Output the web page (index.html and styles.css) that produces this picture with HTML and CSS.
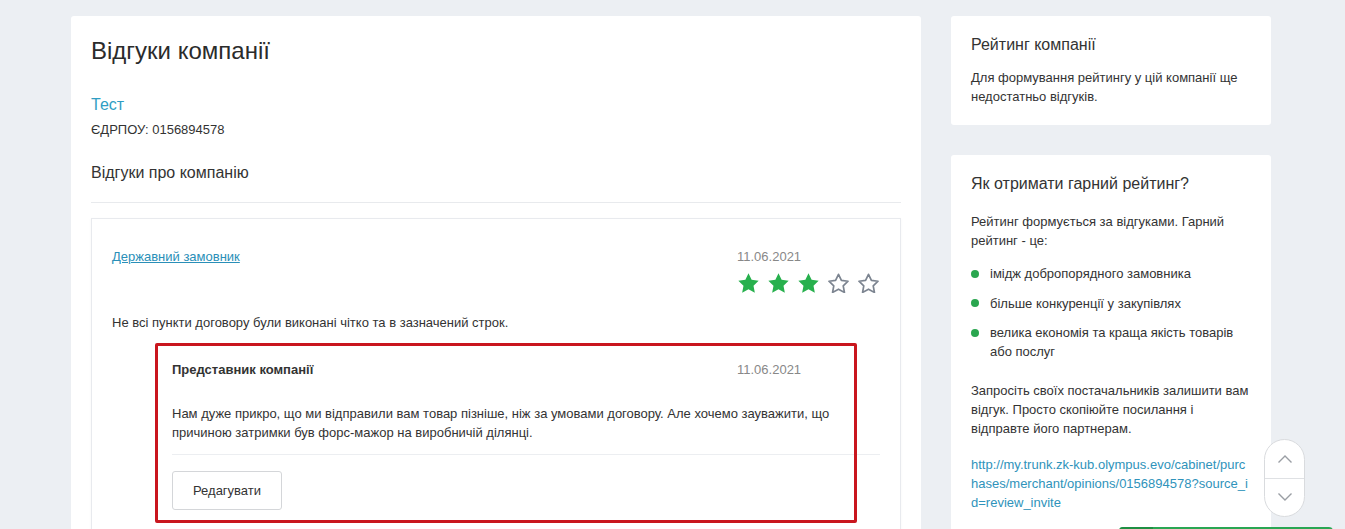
FILE: index.html
```html
<!DOCTYPE html>
<html lang="uk">
<head>
<meta charset="utf-8">
<title>Відгуки компанії</title>
<link rel="stylesheet" href="styles.css">
</head>
<body>
<div class="page">
  <main class="main-card">
    <h1 class="page-title">Відгуки компанії</h1>
    <a class="company-name" href="#">Тест</a>
    <div class="edrpou">ЄДРПОУ: 0156894578</div>
    <h2 class="section-title">Відгуки про компанію</h2>

    <div class="review">
      <div class="review-head">
        <a class="review-author" href="#">Державний замовник</a>
        <div class="review-meta">
          <div class="date">11.06.2021</div>
          <div class="stars">
            <svg class="star star-on" viewBox="1.6 1.5 20.8 19.9"><path d="M12 1.8l3.1 6.5 7 .9-5.1 4.9 1.3 7L12 17.7l-6.3 3.4 1.3-7L1.9 9.2l7-.9z"/></svg>
            <svg class="star star-on" viewBox="1.6 1.5 20.8 19.9"><path d="M12 1.8l3.1 6.5 7 .9-5.1 4.9 1.3 7L12 17.7l-6.3 3.4 1.3-7L1.9 9.2l7-.9z"/></svg>
            <svg class="star star-on" viewBox="1.6 1.5 20.8 19.9"><path d="M12 1.8l3.1 6.5 7 .9-5.1 4.9 1.3 7L12 17.7l-6.3 3.4 1.3-7L1.9 9.2l7-.9z"/></svg>
            <svg class="star star-off" viewBox="1.6 1.5 20.8 19.9"><path d="M12 2.8l2.9 6.1 6.6.8-4.8 4.6 1.2 6.5L12 17.6l-5.9 3.2 1.2-6.5-4.8-4.6 6.6-.8z"/></svg>
            <svg class="star star-off" viewBox="1.6 1.5 20.8 19.9"><path d="M12 2.8l2.9 6.1 6.6.8-4.8 4.6 1.2 6.5L12 17.6l-5.9 3.2 1.2-6.5-4.8-4.6 6.6-.8z"/></svg>
          </div>
        </div>
      </div>
      <p class="review-text">Не всі пункти договору були виконані чітко та в зазначений строк.</p>

      <div class="reply">
        <div class="reply-head">
          <div class="reply-author">Представник компанії</div>
          <div class="reply-meta"><div class="date">11.06.2021</div></div>
        </div>
        <p class="reply-text">Нам дуже прикро, що ми відправили вам товар пізніше, ніж за умовами договору. Але хочемо зауважити, що причиною затримки був форс-мажор на виробничій ділянці.</p>
        <div class="reply-actions">
          <button class="btn" type="button">Редагувати</button>
        </div>
      </div>
    </div>
  </main>

  <aside class="sidebar">
    <section class="side-card">
      <h3 class="side-title">Рейтинг компанії</h3>
      <p class="side-text side-text-first">Для формування рейтингу у цій компанії ще недостатньо відгуків.</p>
    </section>
    <section class="side-card side-card-tall">
      <h3 class="side-title">Як отримати гарний рейтинг?</h3>
      <p class="side-text side-text-lead">Рейтинг формується за відгуками. Гарний рейтинг - це:</p>
      <ul class="benefits">
        <li>імідж добропорядного замовника</li>
        <li>більше конкуренції у закупівлях</li>
        <li>велика економія та краща якість товарів або послуг</li>
      </ul>
      <p class="side-text side-text-invite">Запросіть своїх постачальників залишити вам відгук. Просто скопіюйте посилання і відправте його партнерам.</p>
      <a class="invite-link" href="#">http://my.trunk.zk-kub.olympus.evo/cabinet/purchases/merchant/opinions/0156894578?source_id=review_invite</a>
    </section>
  </aside>
</div>

<div class="highlight"></div>

<div class="scroll-nav">
  <button class="scroll-btn" type="button" aria-label="Вгору">
    <svg viewBox="0 0 16 10" class="chev"><polyline points="1.5,8.5 8,2 14.5,8.5"/></svg>
  </button>
  <button class="scroll-btn scroll-btn-down" type="button" aria-label="Вниз">
    <svg viewBox="0 0 16 10" class="chev"><polyline points="1.5,1.5 8,8 14.5,1.5"/></svg>
  </button>
</div>

<div class="green-widget"><span class="green-widget-icon"></span></div>
</body>
</html>
```

FILE: styles.css
```css
html, body {
  margin: 0;
  padding: 0;
}

body {
  background: #eceff3;
  font-family: "Liberation Sans", Arial, sans-serif;
  font-size: 13px;
  line-height: 1.42857;
  color: #333;
  height: 529px;
  overflow: hidden;
  position: relative;
}

.page {
  display: flex;
  align-items: flex-start;
  padding: 16px 0 0 71px;
  gap: 30px;
}

/* ---------- main card ---------- */
.main-card {
  width: 850px;
  box-sizing: border-box;
  background: #fff;
  border-radius: 3px;
  padding: 22px 20px 20px;
  min-height: 600px;
}

.page-title {
  margin: 0;
  font-size: 24px;
  line-height: 26.4px;
  font-weight: normal;
  color: #2b2b2b;
}

.company-name {
  display: block;
  margin-top: 30px;
  font-size: 16px;
  line-height: 22px;
  color: #2f9dc3;
  text-decoration: none;
}

.edrpou {
  margin-top: 5px;
  line-height: 18px;
}

.section-title {
  margin: 23px 0 0;
  padding-bottom: 18px;
  border-bottom: 1px solid #e8eaed;
  font-size: 16px;
  line-height: 22px;
  font-weight: normal;
  color: #333;
}

.review {
  margin-top: 15px;
  border: 1px solid #e8eaee;
  box-shadow: 0 1px 3px rgba(0, 0, 0, 0.04);
  padding: 29px 20px 20px;
}

.review-head,
.reply-head {
  display: flex;
  justify-content: space-between;
  align-items: flex-start;
}

.review-author {
  color: #2a8fb8;
  text-decoration: underline;
}

.review-meta,
.reply-meta {
  width: 143px;
  flex: none;
}

.date {
  color: #888;
}

.stars {
  display: flex;
  gap: 9px;
  margin-top: 6px;
  margin-left: 1px;
}

.star {
  width: 21px;
  height: 20px;
  display: block;
}

.star-on path {
  fill: #27b04d;
}

.star-off path {
  fill: none;
  stroke: #7c8490;
  stroke-width: 1.7;
  stroke-linejoin: round;
}

.review-text {
  margin: 21px 0 0;
}

.reply {
  margin: 28px 0 0 60px;
}

.reply-author {
  font-weight: bold;
}

.reply-text {
  margin: 25px 0 0;
  line-height: 19px;
}

.reply-actions {
  margin-top: 12px;
  border-top: 1px solid #eceef1;
  padding-top: 16px;
}

.btn {
  font-family: inherit;
  font-size: 13px;
  color: #333;
  background: #fff;
  border: 1px solid #d4d6d9;
  border-radius: 3px;
  height: 39px;
  padding: 0 20px;
  line-height: 37px;
  cursor: pointer;
}

/* ---------- sidebar ---------- */
.sidebar {
  width: 320px;
  display: flex;
  flex-direction: column;
  gap: 30px;
}

.side-card {
  background: #fff;
  border-radius: 3px;
  padding: 20px 20px 19px;
  line-height: 19px;
}

.side-card-tall {
  min-height: 420px;
}

.side-title {
  margin: 0;
  font-size: 16px;
  line-height: 17.6px;
  font-weight: normal;
  color: #333;
}

.side-text {
  margin: 0;
}

.side-text-first {
  margin-top: 14px;
}

.side-text-lead {
  margin-top: 20px;
}

.benefits {
  list-style: none;
  margin: 14px 0 0;
  padding: 0;
}

.benefits li {
  position: relative;
  padding-left: 19px;
  margin-bottom: 10.5px;
}

.benefits li:last-child {
  margin-bottom: 0;
}

.benefits li::before {
  content: "";
  position: absolute;
  left: 0;
  top: 5.5px;
  width: 8px;
  height: 8px;
  border-radius: 50%;
  background: #2aa64f;
}

.side-text-invite {
  margin-top: 20px;
}

.invite-link {
  display: block;
  margin-top: 17px;
  color: #2f93bb;
  text-decoration: none;
  word-break: break-all;
}

/* ---------- overlays ---------- */
.highlight {
  position: absolute;
  left: 155px;
  top: 343px;
  width: 702px;
  height: 180px;
  box-sizing: border-box;
  border: 3px solid #c9161e;
  border-radius: 2px;
  pointer-events: none;
}

.scroll-nav {
  position: absolute;
  left: 1264px;
  top: 439px;
  width: 41px;
  height: 78px;
  box-sizing: border-box;
  border: 1px solid #d9dbde;
  border-radius: 21px;
  background: #fff;
  display: flex;
  flex-direction: column;
  overflow: hidden;
}

.scroll-btn {
  flex: 1;
  border: 0;
  background: transparent;
  padding: 0;
  display: flex;
  align-items: center;
  justify-content: center;
}

.scroll-btn-down {
  border-top: 1px solid #dfe1e4;
}

.chev {
  width: 16px;
  height: 10px;
  display: block;
}

.chev polyline {
  fill: none;
  stroke: #9a9ea4;
  stroke-width: 1.4;
}

.green-widget {
  position: absolute;
  left: 1119px;
  top: 527px;
  width: 214px;
  height: 20px;
  background: #2aa653;
  border-radius: 4px 4px 0 0;
  overflow: hidden;
  display: flex;
}

.green-widget-icon {
  width: 34px;
  background: #1f8f43;
}
```
